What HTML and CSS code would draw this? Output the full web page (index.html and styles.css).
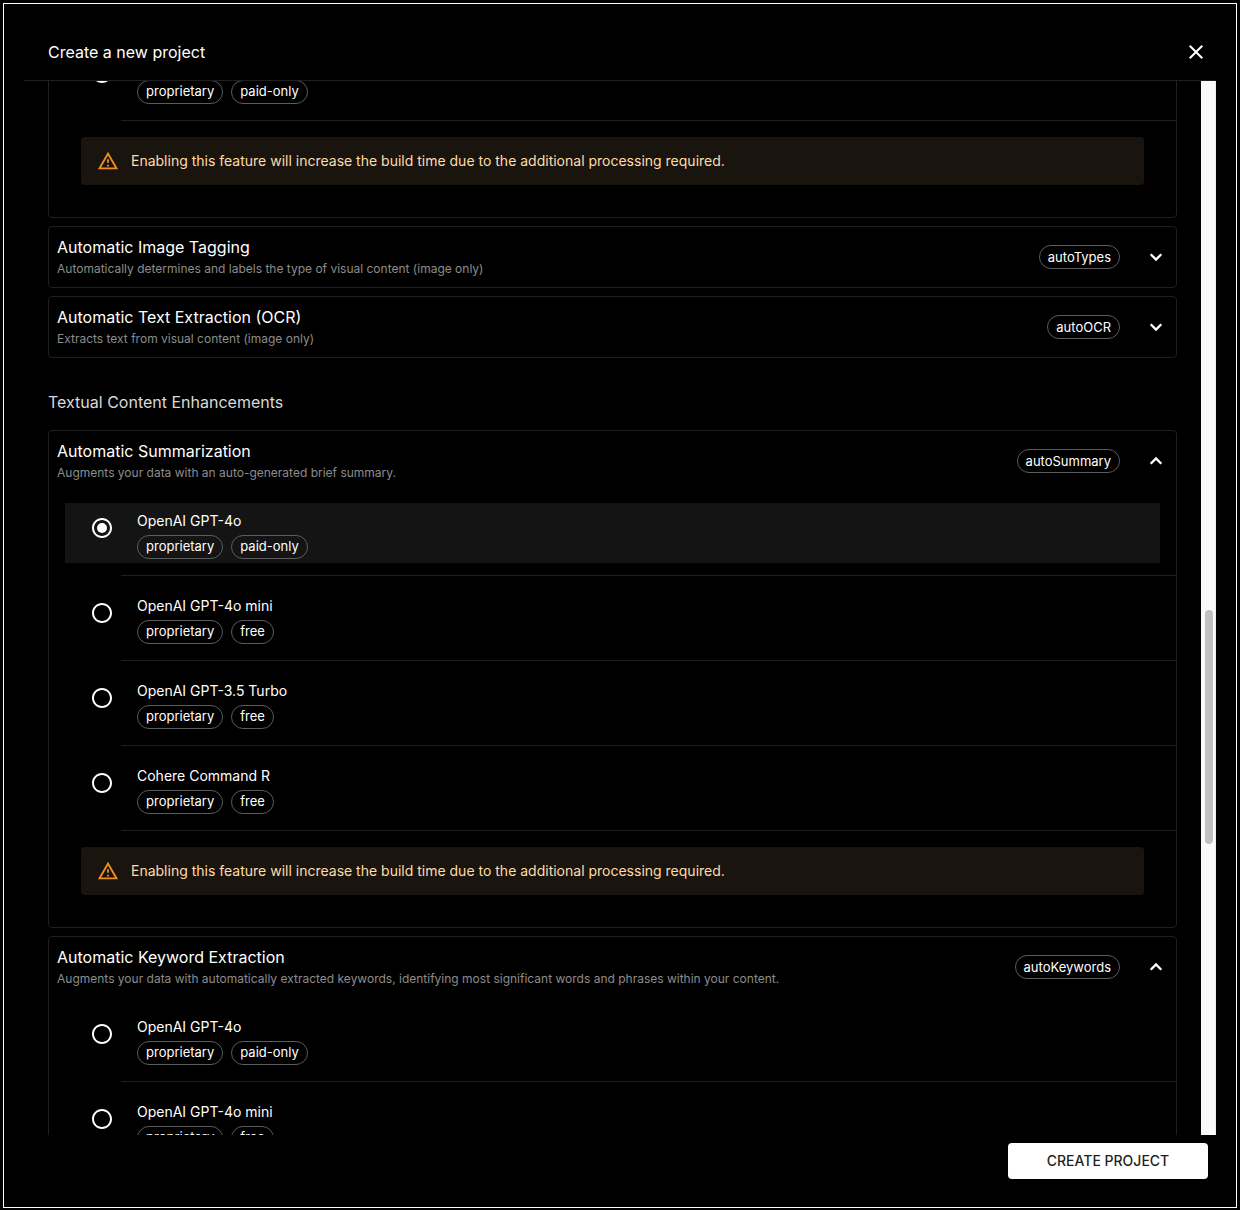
FILE: index.html
```html
<!DOCTYPE html>
<html lang="en">
<head>
<meta charset="utf-8">
<title>Create a new project</title>
<link rel="stylesheet" href="styles.css">
</head>
<body>
<svg class="sprite" aria-hidden="true">
  <symbol id="more" viewBox="0 0 24 24"><path d="M6.700 9.300 12 14.600 17.300 9.300"/></symbol>
  <symbol id="less" viewBox="0 0 24 24"><path d="M6.700 14.700 12 9.400 17.300 14.700"/></symbol>
  <symbol id="radio" viewBox="0 0 24 24"><path d="M12 2C6.48 2 2 6.48 2 12s4.48 10 10 10 10-4.48 10-10S17.52 2 12 2zm0 18c-4.42 0-8-3.58-8-8s3.58-8 8-8 8 3.580 8 8-3.580 8-8 8z"/></symbol>
  <symbol id="radio-on" viewBox="0 0 24 24"><use href="#radio"/><circle cx="12" cy="12" r="5"/></symbol>
  <symbol id="warn" viewBox="0 0 24 24"><path d="M12 5.99L19.53 19H4.470L12 5.990M12 2L1 21h22L12 2zm1 14h-2v2h2v-2zm0-6h-2v4h2v-4z"/></symbol>
</svg>
<div class="dialog">
  <header class="dialog-header">
    <h1 class="title">Create a new project</h1>
    <svg class="icon" viewBox="0 0 24 24"><path d="M19 6.41 17.59 5 12 10.59 6.41 5 5 6.410 10.59 12 5 17.590 6.410 19 12 13.410 17.590 19 19 17.590 13.410 12z"/></svg>
  </header>
  <div class="scroller">
    <main class="content">
      <section class="card card-cut">
        <div class="option"><svg class="icon"><use href="#radio-on"/></svg><div><div class="name"></div><div class="chips"><span class="chip">proprietary</span><span class="chip">paid-only</span></div></div></div>
        <div class="divider"></div>
        <div class="alert"><svg class="warn"><use href="#warn"/></svg><span>Enabling this feature will increase the build time due to the additional processing required.</span></div>
      </section>
      <section class="card">
        <div class="card-header"><div class="heading"><div class="title">Automatic Image Tagging</div><div class="caption">Automatically determines and labels the type of visual content (image only)</div></div><span class="chip">autoTypes</span><svg class="icon chevron"><use href="#more"/></svg></div>
      </section>
      <section class="card">
        <div class="card-header"><div class="heading"><div class="title">Automatic Text Extraction (OCR)</div><div class="caption">Extracts text from visual content (image only)</div></div><span class="chip">autoOCR</span><svg class="icon chevron"><use href="#more"/></svg></div>
      </section>
      <h2 class="group">Textual Content Enhancements</h2>
      <section class="card">
        <div class="card-header"><div class="heading"><div class="title">Automatic Summarization</div><div class="caption">Augments your data with an auto-generated brief summary.</div></div><span class="chip">autoSummary</span><svg class="icon chevron"><use href="#less"/></svg></div>
        <div class="options">
          <div class="option selected"><svg class="icon"><use href="#radio-on"/></svg><div><div class="name">OpenAI GPT-4o</div><div class="chips"><span class="chip">proprietary</span><span class="chip">paid-only</span></div></div></div>
          <div class="divider"></div>
          <div class="option"><svg class="icon"><use href="#radio"/></svg><div><div class="name">OpenAI GPT-4o mini</div><div class="chips"><span class="chip">proprietary</span><span class="chip">free</span></div></div></div>
          <div class="divider"></div>
          <div class="option"><svg class="icon"><use href="#radio"/></svg><div><div class="name">OpenAI GPT-3.5 Turbo</div><div class="chips"><span class="chip">proprietary</span><span class="chip">free</span></div></div></div>
          <div class="divider"></div>
          <div class="option"><svg class="icon"><use href="#radio"/></svg><div><div class="name">Cohere Command R</div><div class="chips"><span class="chip">proprietary</span><span class="chip">free</span></div></div></div>
          <div class="divider"></div>
        </div>
        <div class="alert"><svg class="warn"><use href="#warn"/></svg><span>Enabling this feature will increase the build time due to the additional processing required.</span></div>
      </section>
      <section class="card">
        <div class="card-header"><div class="heading"><div class="title">Automatic Keyword Extraction</div><div class="caption">Augments your data with automatically extracted keywords, identifying most significant words and phrases within your content.</div></div><span class="chip">autoKeywords</span><svg class="icon chevron"><use href="#less"/></svg></div>
        <div class="options">
          <div class="option"><svg class="icon"><use href="#radio"/></svg><div><div class="name">OpenAI GPT-4o</div><div class="chips"><span class="chip">proprietary</span><span class="chip">paid-only</span></div></div></div>
          <div class="divider"></div>
          <div class="option"><svg class="icon"><use href="#radio"/></svg><div><div class="name">OpenAI GPT-4o mini</div><div class="chips"><span class="chip">proprietary</span><span class="chip">free</span></div></div></div>
        </div>
      </section>
    </main>
    <div class="scrollbar"><div class="thumb"></div></div>
  </div>
  <footer class="footer"><button class="create">CREATE PROJECT</button></footer>
</div>
</body>
</html>
```
FILE: styles.css
```css
* { box-sizing: border-box; }
body {
  margin: 0;
  padding: 3px 3px 2px;
  height: 1210px;
  overflow: hidden;
  background: #000;
  color: #fff;
  font: 14px/20px Inter, sans-serif;
}
.sprite { display: none; }
.dialog {
  display: flex;
  flex-direction: column;
  height: 1205px;
  padding: 20px;
  border: 1px solid #fff;
}
.dialog-header {
  display: flex;
  flex: none;
  align-items: center;
  justify-content: space-between;
  height: 57px;
  padding: 0 8px 0 24px;
  border-bottom: 1px solid #1f1f1f;
}
.title {
  margin: 0;
  font-size: 16px;
  line-height: 24px;
  font-weight: 400;
}
.icon {
  display: block;
  flex: none;
  width: 24px;
  height: 24px;
  fill: #fff;
}
.chevron {
  fill: none;
  stroke: #fff;
  stroke-width: 2.3;
}
.scroller {
  display: flex;
  flex: none;
  height: 1054px;
  overflow: hidden;
}
.content { flex: 1; padding: 0 24px; }
.card {
  margin-bottom: 8px;
  border: 1px solid #1f1f1f;
  border-radius: 4px;
}
.card-cut { margin-top: -34px; }
.card-header {
  display: flex;
  align-items: center;
  gap: 24px;
  padding: 8px;
}
.heading { flex: 1; }
.caption {
  font-size: 12px;
  color: #8c8c8c;
}
.chip {
  height: 24px;
  padding: 0 8px;
  border: 1px solid #5c5c5c;
  border-radius: 12px;
  font-size: 13px;
  line-height: 22px;
}
.group {
  margin: 32px 0 16px;
  font-size: 16px;
  line-height: 24px;
  font-weight: 400;
  color: #d9d9d9;
}
.options { padding-top: 12px; }
.option {
  display: flex;
  gap: 23px;
  height: 60px;
  margin: 0 16px;
  padding: 8px 25px 4px;
}
.option .icon { margin-top: 5px; }
.name { height: 20px; }
.selected { background: #141414; }
.chips { display: flex; gap: 8px; margin-top: 4px; }
.chips .chip { line-height: 20px; }
.divider {
  height: 1px;
  margin: 12px 0 12px 72px;
  background: #1f1f1f;
}
.alert {
  display: flex;
  align-items: center;
  gap: 12px;
  height: 48px;
  margin: 16px 32px 32px;
  padding: 0 16px;
  border-radius: 4px;
  background: #19140d;
  color: #ffdcab;
}
.warn { width: 22px; height: 22px; fill: #ed8f1c; }
.scrollbar {
  width: 15px;
  padding: 529px 2px 0 4px;
  border-right: 1px solid #ededed;
  background: #fafafa;
}
.thumb { height: 234px; border-radius: 4px; background: #c1c1c1; }
.footer {
  display: flex;
  justify-content: flex-end;
  padding: 8px;
}
.create {
  width: 200px;
  height: 36px;
  border: 0;
  border-radius: 4px;
  background: #fff;
  color: #1f1f1f;
  font: 500 14px/24px Inter, sans-serif;
}
```
